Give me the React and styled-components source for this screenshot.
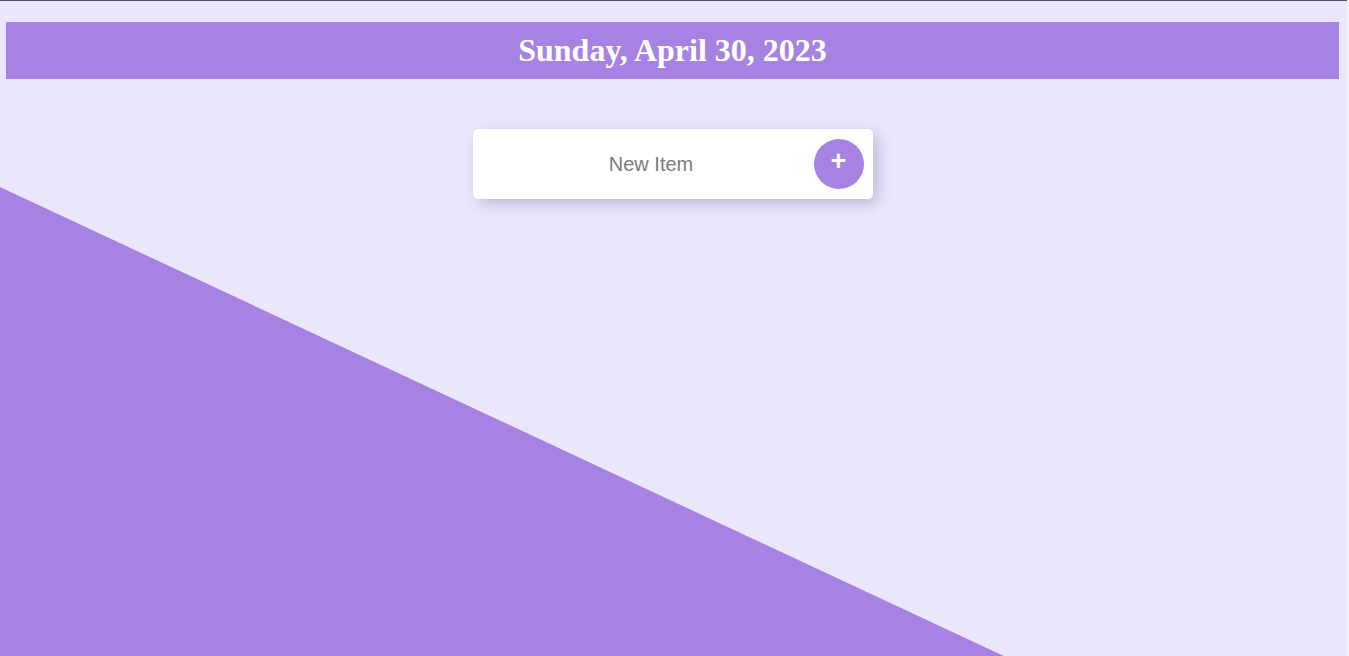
import styled, { createGlobalStyle } from "styled-components";
import { useState } from "react";

const GlobalStyle = createGlobalStyle`
  html {
    background: #f4f4ef;
  }
  body {
    margin: 0;
    font-family: "Liberation Serif", "Times New Roman", serif;
  }
`;

export default function App() {
  const [text, setText] = useState("");

  return (
    <Page>
      <GlobalStyle />
      <Wave />
      <Heading>
        <Day>Sunday, April 30, 2023</Day>
      </Heading>
      <ItemForm onSubmit={(e) => e.preventDefault()}>
        <ItemInput
          value={text}
          onChange={(e) => setText(e.target.value)}
          placeholder="New Item"
        />
        <AddButton type="submit">+</AddButton>
      </ItemForm>
    </Page>
  );
}

const Page = styled.div`
  position: relative;
  width: 1347px;
  height: 656px;
  box-sizing: border-box;
  border-top: 1px solid #55555b;
  background-color: #eae7fd;
  overflow: hidden;
  display: flex;
  flex-flow: column;
  align-items: center;
  padding: 21px 8px 0 6px;
`;

// background slope sitting under everything
const Wave = styled.div`
  position: absolute;
  left: 0;
  top: 0;
  width: 100%;
  height: 100%;
  background-color: #a683e3;
  clip-path: polygon(0 186px, 1006px 656px, 0 656px);
  z-index: 0;
`;

const Heading = styled.div`
  position: relative;
  z-index: 1;
  width: 100%;
  height: 57px;
  background-color: #a683e3;
  display: flex;
  justify-content: center;
  align-items: center;
`;

const Day = styled.h1`
  margin: 0;
  color: #ffffff;
  font-size: 32px;
  font-weight: 700;
`;

const ItemForm = styled.form`
  position: relative;
  z-index: 1;
  width: 400px;
  height: 70px;
  margin-top: 50px;
  box-sizing: border-box;
  background-color: #ffffff;
  border-radius: 5px;
  box-shadow: 5px 5px 15px rgba(60, 50, 110, 0.25);
  display: flex;
  align-items: center;
  padding: 0 9px 0 0;
`;

const ItemInput = styled.input`
  flex: 1;
  border: none;
  outline: none;
  background: transparent;
  text-align: center;
  font-family: "Liberation Sans", Arial, sans-serif;
  font-size: 20px;
  color: #333;
  padding: 0 0 0 16px;
  &::placeholder {
    color: #7b7b7b;
  }
`;

const AddButton = styled.button`
  width: 50px;
  height: 50px;
  border: none;
  border-radius: 50%;
  background-color: #a683e3;
  color: #ffffff;
  font-family: "Liberation Sans", Arial, sans-serif;
  font-size: 27px;
  font-weight: 700;
  line-height: 1;
  padding: 0 0 6px 0;
  cursor: pointer;
`;
